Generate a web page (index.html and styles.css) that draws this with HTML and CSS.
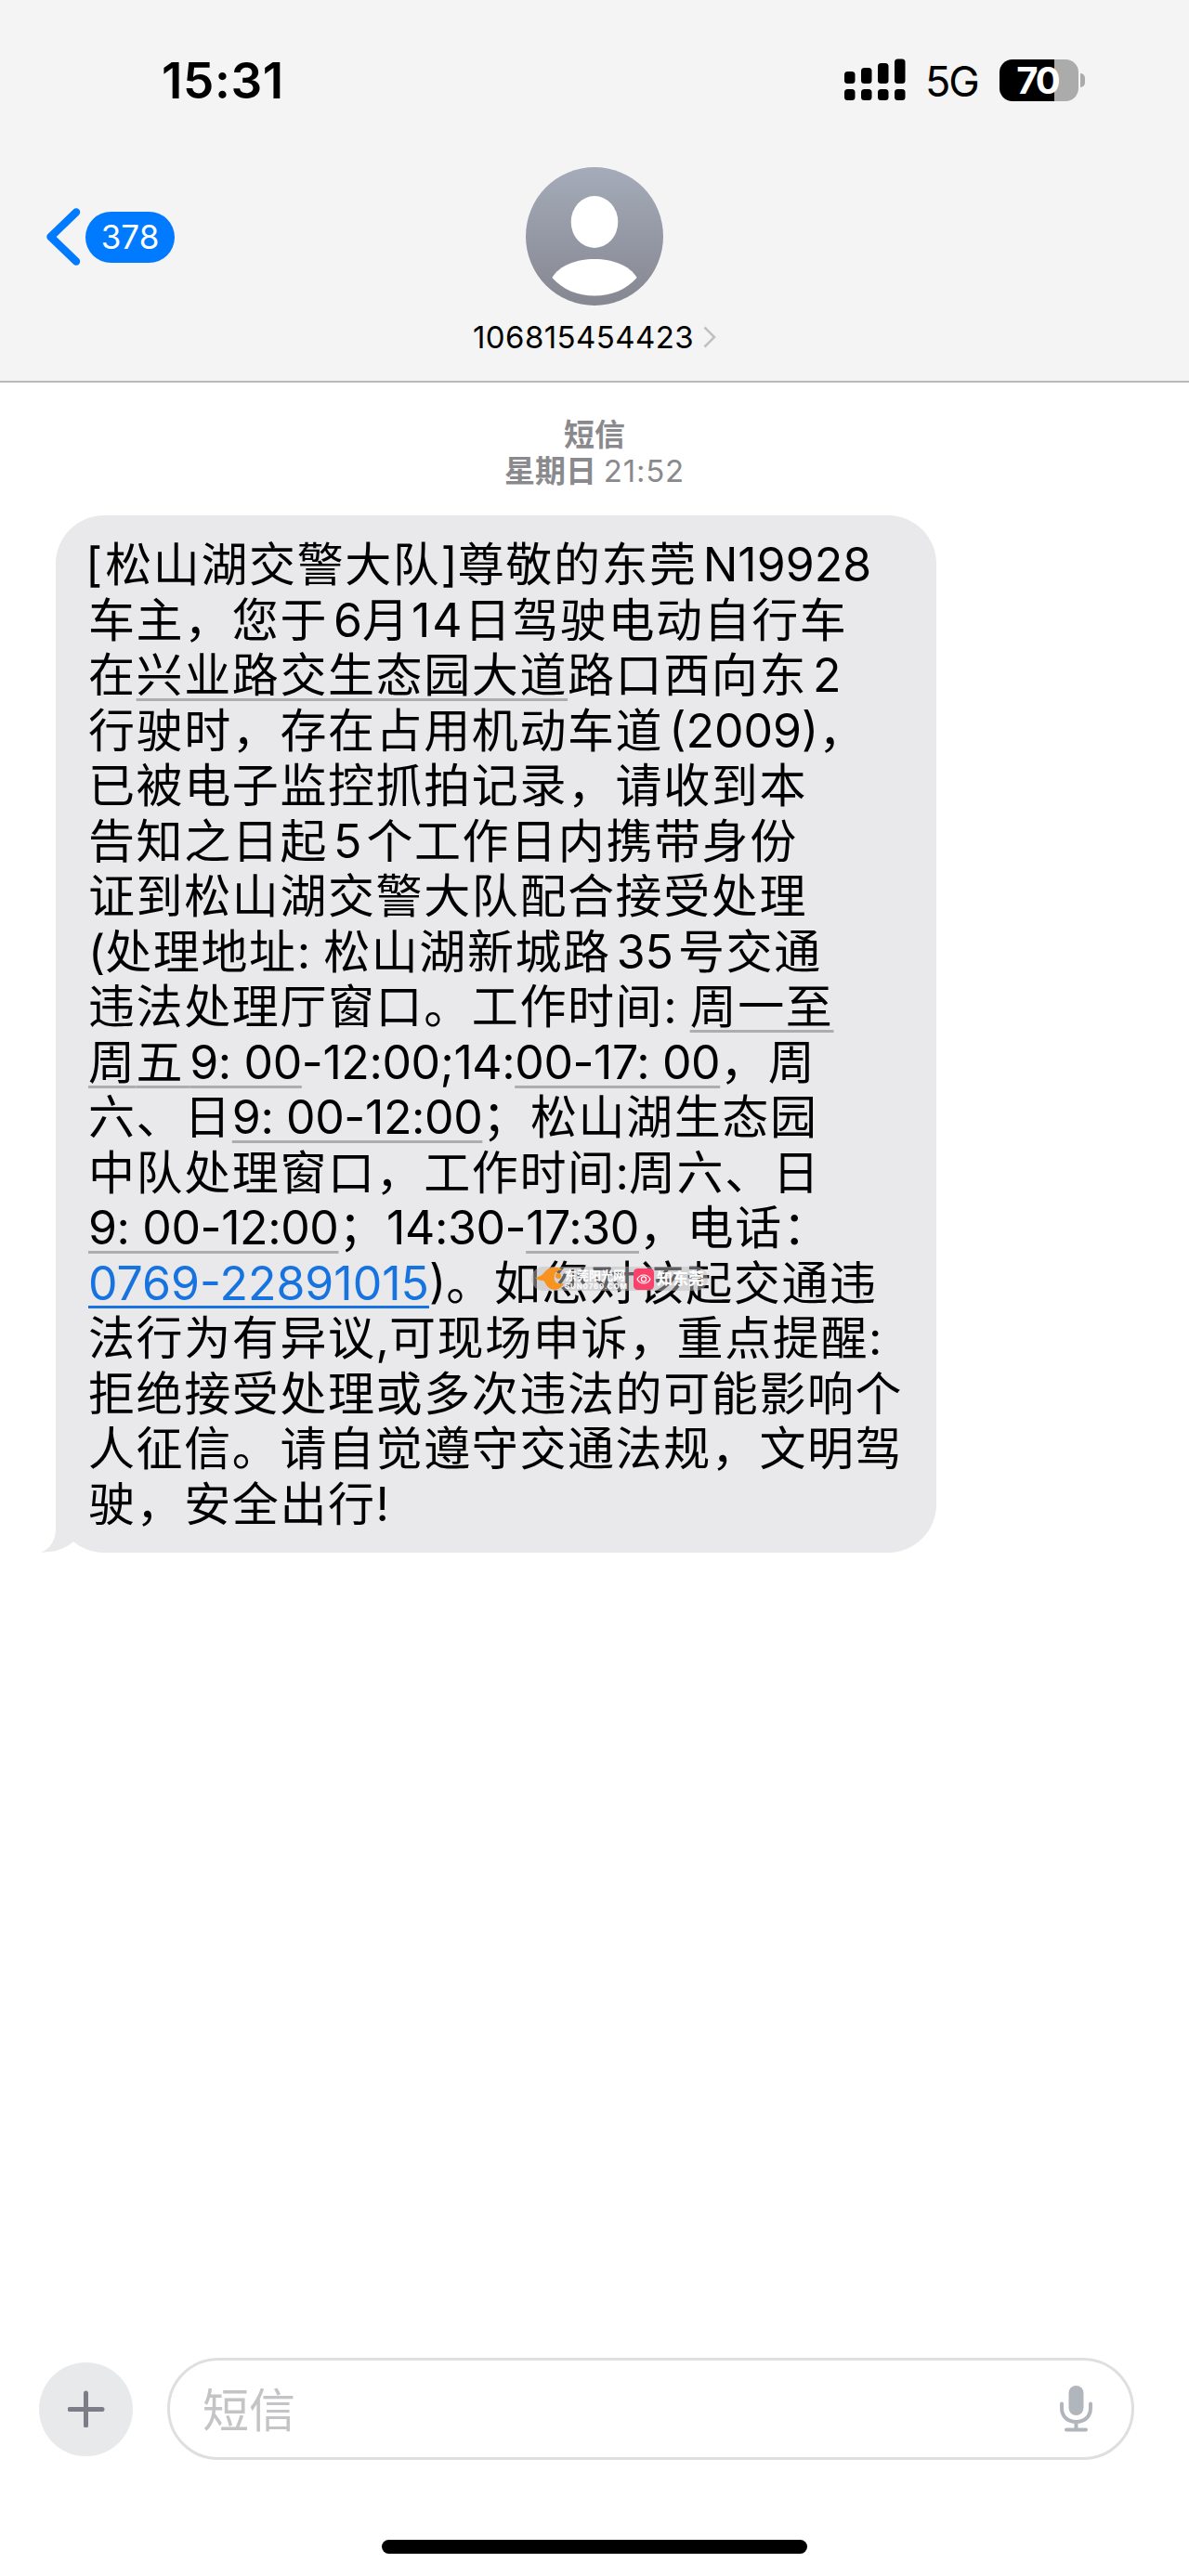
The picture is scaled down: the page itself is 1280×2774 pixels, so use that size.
FILE: index.html
```html
<!DOCTYPE html>
<html lang="zh-CN">
<head>
    <meta charset="UTF-8">
    <meta name="viewport" content="width=device-width, initial-scale=1.0">
    <title>短信</title>
    <link rel="stylesheet" href="styles.css">
</head>
<body>
    <div class="screen">
        <header class="header">
            <div class="status-bar">
                <span class="time">15:31</span>
                <div class="status-right">
                    <svg class="signal" width="66" height="46" viewBox="0 0 66 46">
                        <rect x="0" y="14" width="11.5" height="13" rx="3.5"/>
                        <rect x="18" y="10" width="11.5" height="17" rx="3.5"/>
                        <rect x="36" y="5" width="11.5" height="22" rx="3.5"/>
                        <rect x="54" y="0.5" width="11.5" height="26.5" rx="3.5"/>
                        <rect x="0" y="33" width="11.5" height="12" rx="3.5"/>
                        <rect x="18" y="33" width="11.5" height="12" rx="3.5"/>
                        <rect x="36" y="33" width="11.5" height="12" rx="3.5"/>
                        <rect x="54" y="33" width="11.5" height="12" rx="3.5"/>
                    </svg>
                    <span class="network">5G</span>
                    <div class="battery"><span>70</span></div>
                    <div class="battery-cap"></div>
                </div>
            </div>

            <div class="nav">
                <div class="back">
                    <svg width="38" height="64" viewBox="0 0 38 64">
                        <path d="M32 5.500 L4.500 32 L32 58.500" fill="none" stroke="#007aff" stroke-width="8.500" stroke-linecap="round" stroke-linejoin="round"/>
                    </svg>
                    <span class="unread">378</span>
                </div>
                <div class="contact">
                    <svg class="avatar" width="148" height="149" viewBox="0 0 148 149">
                        <defs>
                            <linearGradient id="avatarBg" x1="0" y1="0" x2="0" y2="1">
                                <stop offset="0" stop-color="#a5abb9"/>
                                <stop offset="1" stop-color="#858791"/>
                            </linearGradient>
                        </defs>
                        <ellipse cx="74" cy="74.500" rx="74" ry="74.500" fill="url(#avatarBg)"/>
                        <ellipse cx="74" cy="59" rx="25.300" ry="28" fill="#fff"/>
                        <path d="M28.300 119 C36 106 54 99 74 99 C94 99 112 106 119.700 119 C108 132 92 138.500 74 138.500 C56 138.500 40 132 28.300 119 Z" fill="#fff"/>
                    </svg>
                    <div class="contact-name">
                        <span>106815454423</span>
                        <svg width="14" height="24" viewBox="0 0 14 24">
                            <path d="M1.500 1.500 L12 12 L1.500 22.500" fill="none" stroke="#c0c0c3" stroke-width="2.600"/>
                        </svg>
                    </div>
                </div>
            </div>
        </header>

        <main class="messages">
            <div class="timestamp">
                <p>短信</p>
                <p>星期日 <span>21:52</span></p>
            </div>

            <div class="bubble">
                <p><span class="n bracket">[</span>松山湖交警大队<span class="n">]</span>尊敬的东莞<span class="n gap">N19928</span></p>
                <p>车主，您于<span class="n gap">6</span><span class="month">月</span><span class="day">14</span>日驾驶电动自行车</p>
                <p>在<u>兴业路交生态园大道</u>路口西向东<span class="n gap">2</span></p>
                <p>行驶时，存在占用机动车道<span class="n gap">(2009)</span>，</p>
                <p>已被电子监控抓拍记录，请收到本</p>
                <p>告知之日起<span class="n gap gap-after">5</span>个工作日内携带身份</p>
                <p>证到松山湖交警大队配合接受处理</p>
                <p><span class="n">(</span>处理地址<span class="n">: </span>松山湖新城路<span class="n gap gap-after">35</span>号交通</p>
                <p>违法处理厅窗口。工作时间<span class="n">: </span><u>周一至</u></p>
                <p><u>周<span class="wide">五</span><span class="hours">9: 00</span></u><span class="hours">-12:00;14:<u>00-17: 00</u></span>，周</p>
                <p>六、日<span class="hours"><u>9: 00-12:00</u></span>；松山湖生态园</p>
                <p>中队处理窗口，工作时间<span class="n">:</span>周六、日</p>
                <p><span class="hours"><u>9: 00-12:00</u></span>；<span class="hours">14:30-<u>17:30</u></span>，电话：</p>
                <p><span class="n"><a class="phone">0769-22891015</a>)</span>。如您对该起交通违</p>
                <p>法行为有异议<span class="n">,</span>可现场申诉，重点提醒<span class="n">:</span></p>
                <p>拒绝接受处理或多次违法的可能影响个</p>
                <p>人征信。请自觉遵守交通法规，文明驾</p>
                <p>驶，安全出行<span class="n">!</span></p>

                <svg class="tail" width="50" height="52" viewBox="0 0 50 52">
                    <path d="M16 0 V26 C16 39 10 48 0 51.500 C14 52 26 48 35 40 L50 20 V0 Z" fill="#e9e9eb"/>
                    <path d="M16 52 C24 50 30 46 35 41 C39 45 44 48 50 50 V52 Z" fill="#fff"/>
                </svg>

                <!-- 水印 -->
                <div class="watermark">
                    <svg width="32" height="26" viewBox="0 0 32 26">
                        <path d="M0 12 C5 11 8 9 11 5 C15 0 25 -1 30 4 C26 3 22 5 21 9 C19 15 23 20 31 18 C28 25 19 27 14 22 C11 19 11 15 8 15 C5 15 3 14 0 12 Z" fill="#f7931e"/>
                        <circle cx="25" cy="10" r="3" fill="#f7931e"/>
                    </svg>
                    <div class="wm-text">
                        <b>东莞阳光网</b>
                        <small>SUN0769.COM</small>
                    </div>
                    <svg class="wm-app" width="22" height="23" viewBox="0 0 22 23">
                        <rect width="22" height="23" rx="4.500" fill="#f9416b"/>
                        <path d="M4 11.500 C7 5.500 15 5.500 18 11.500 C15 17.500 7 17.500 4 11.500 Z" fill="none" stroke="#fff" stroke-width="1.200"/>
                        <circle cx="11" cy="11.500" r="2.600" fill="none" stroke="#fff" stroke-width="1.200"/>
                    </svg>
                    <b class="wm-name">知东莞</b>
                </div>
            </div>
        </main>

        <footer class="footer">
            <div class="compose">
                <div class="add-btn">
                    <svg width="40" height="40" viewBox="0 0 40 40">
                        <path d="M19.500 3 V38 M2 20.500 H37" stroke="#7d7d88" stroke-width="5" stroke-linecap="round"/>
                    </svg>
                </div>
                <div class="input">
                    <span>短信</span>
                    <svg width="35" height="50" viewBox="0 0 35 50">
                        <rect x="9.500" y="0" width="16" height="32" rx="8" fill="#b1b6bc"/>
                        <path d="M2 19.500 V24 C2 33.500 8.500 39 17.500 39 C26.500 39 33 33.500 33 24 V19.500 M17.500 39 V46 M7 47.500 H28" fill="none" stroke="#b1b6bc" stroke-width="4" stroke-linecap="round"/>
                    </svg>
                </div>
            </div>
            <div class="home-bar"></div>
        </footer>
    </div>
</body>
</html>
```
FILE: styles.css
```css
body {
    margin: 0;
    background: #fff;
    color: #000;
    font-family: Inter, "Noto Sans CJK SC", sans-serif;
}

p {
    margin: 0;
}

svg {
    display: block;
    flex: none;
}

.screen {
    display: flex;
    flex-direction: column;
    width: 1280px;
    height: 2774px;
    overflow: hidden;
}

.header {
    box-sizing: border-box;
    height: 412px;
    background: #f4f4f4;
    border-bottom: 2px solid #b9b9b9;
}

.status-bar {
    display: flex;
    justify-content: space-between;
    align-items: center;
    height: 46px;
    padding: 63px 112px 0 174px;
}

.time {
    font-size: 53px;
    font-weight: 600;
    line-height: 46px;
    letter-spacing: 0.6px;
    padding-top: 2px;
}

.status-right {
    display: flex;
    align-items: center;
}

.network {
    margin-left: 21px;
    width: 59px;
    font-size: 45px;
    line-height: 46px;
    letter-spacing: -2px;
    padding-top: 3px;
}

.battery {
    box-sizing: border-box;
    width: 85px;
    height: 45px;
    margin-left: 21px;
    padding-right: 3px;
    border-radius: 14px;
    background: linear-gradient(90deg, #000 70%, #ababab 70%);
    color: #fff;
    font-size: 40px;
    font-weight: 700;
    line-height: 45px;
    letter-spacing: -2px;
    text-align: center;
}

.battery-cap {
    width: 5px;
    height: 15px;
    margin-left: 2px;
    border-radius: 0 5px 5px 0;
    background: #ababab;
}

.nav {
    display: grid;
    grid-template-columns: 1fr 1fr 1fr;
    padding-top: 71px;
}

.back {
    display: flex;
    align-items: center;
    gap: 4px;
    height: 150px;
    padding-left: 50px;
}

.unread {
    width: 96px;
    height: 55px;
    border-radius: 28px;
    background: #007aff;
    color: #fff;
    font-size: 35px;
    line-height: 55px;
    text-align: center;
}

.contact {
    display: flex;
    flex-direction: column;
    align-items: center;
}

.contact-name {
    display: flex;
    align-items: center;
    gap: 10px;
    margin-top: 13px;
    font-size: 33px;
    line-height: 42px;
    letter-spacing: 0.4px;
}

.messages {
    flex: 1;
}

.timestamp {
    padding-top: 37px;
    color: #8a8a8e;
    font-size: 33px;
    font-weight: 700;
    line-height: 39px;
    text-align: center;
}

.timestamp span {
    font-weight: 400;
    letter-spacing: 0.8px;
}

.bubble {
    position: relative;
    box-sizing: border-box;
    width: 948px;
    height: 1117px;
    margin: 28px 0 0 60px;
    padding: 24px 0 0 35px;
    border-radius: 52px;
    background: #e9e9eb;
    font-size: 50px;
    line-height: 59.5px;
    letter-spacing: 1.6px;
    text-spacing-trim: space-all;
    white-space: nowrap;
}

.bubble p {
    height: 59.5px;
}

.bubble u {
    text-decoration: underline #adadaf 2.5px;
    text-underline-offset: 7px;
    text-decoration-skip-ink: none;
}

.n {
    letter-spacing: 0;
}

.hours {
    letter-spacing: -0.4px;
}

.wide {
    letter-spacing: 7.6px;
}

.month {
    letter-spacing: 3px;
}

.day {
    letter-spacing: 2px;
}

.bracket {
    margin-left: -3px;
    margin-right: 3px;
}

.gap {
    padding-left: 6px;
}

.gap-after {
    padding-right: 5px;
}

.phone {
    color: #1673e0;
    text-decoration: underline 3px;
    text-underline-offset: 6px;
    text-decoration-skip-ink: none;
}

.tail {
    position: absolute;
    left: -16px;
    bottom: 0;
}

.watermark {
    position: absolute;
    left: 512px;
    top: 809px;
    display: flex;
    align-items: center;
    height: 26px;
    padding: 0 4px;
    border-radius: 13px;
    background: rgba(190, 190, 194, 0.5);
    color: #fff;
    letter-spacing: 0;
}

.wm-text {
    width: 70px;
}

.wm-text b {
    display: block;
    font-size: 13px;
    line-height: 16px;
}

.wm-text small {
    display: block;
    font-size: 8px;
    font-weight: 700;
    line-height: 8px;
    letter-spacing: 0.8px;
}

.wm-app {
    margin: 0 3px 0 4px;
}

.wm-name {
    font-size: 17px;
    line-height: 20px;
}

.footer {
    height: 235px;
}

.compose {
    display: flex;
    align-items: center;
    gap: 37px;
    padding-left: 42px;
}

.add-btn {
    display: flex;
    align-items: center;
    justify-content: center;
    width: 101px;
    height: 101px;
    border-radius: 50%;
    background: #e8e9eb;
}

.input {
    box-sizing: border-box;
    display: flex;
    align-items: center;
    justify-content: space-between;
    width: 1041px;
    height: 110px;
    padding: 0 42px 0 35px;
    border: 3px solid #dfdfdf;
    border-radius: 55px;
    color: #c4c4c6;
    font-size: 50px;
}

.input span {
    padding-bottom: 4px;
}

.home-bar {
    width: 458px;
    height: 15px;
    margin: 86px auto 0;
    border-radius: 8px;
    background: #000;
}
```
